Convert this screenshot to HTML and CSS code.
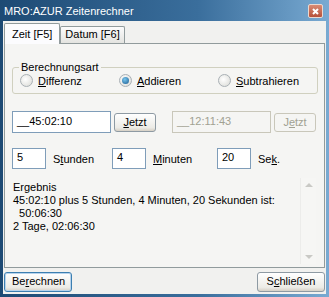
FILE: index.html
```html
<!DOCTYPE html>
<html lang="de">
<head>
    <meta charset="UTF-8">
    <title>MRO:AZUR Zeitenrechner</title>
    <link rel="stylesheet" href="styles.css">
</head>
<body>
    <div class="window">
        <div class="titlebar">
            <span class="title">MRO:AZUR Zeitenrechner</span>
            <span class="close">
                <svg width="13" height="13" viewBox="0 0 13 13">
                    <path d="M4 4 L9 9 M9 4 L4 9" stroke="#fff" stroke-width="2"/>
                </svg>
            </span>
        </div>
        <div class="client">
            <div class="tabs">
                <div class="tab active">Zeit [F5]</div>
                <div class="tab">Datum [F6]</div>
            </div>
            <div class="panel">
                <fieldset class="group">
                    <legend>Berechnungsart</legend>
                    <label class="radio"><span class="dot"></span><span><u>D</u>ifferenz</span></label>
                    <label class="radio"><span class="dot checked"></span><span><u>A</u>ddieren</span></label>
                    <label class="radio"><span class="dot"></span><span><u>S</u>ubtrahieren</span></label>
                </fieldset>

                <div class="time-row">
                    <div class="field time">__45:02:10</div>
                    <div class="btn"><u>J</u>etzt</div>
                    <div class="field time disabled">__12:11:43</div>
                    <div class="btn disabled">J<u>e</u>tzt</div>
                </div>

                <div class="num-row">
                    <div class="field num">5</div>
                    <span class="unit">S<u>t</u>unden</span>
                    <div class="field num">4</div>
                    <span class="unit wide"><u>M</u>inuten</span>
                    <div class="field num">20</div>
                    <span class="unit">Se<u>k</u>.</span>
                </div>

                <div class="result">
                    <div class="result-text">Ergebnis
45:02:10 plus 5 Stunden, 4 Minuten, 20 Sekunden ist:
  50:06:30
2 Tage, 02:06:30</div>
                    <div class="scrollbar">
                        <span class="arrow up"></span>
                        <span class="arrow down"></span>
                    </div>
                </div>
            </div>
            <div class="footer">
                <div class="btn default">Be<u>r</u>echnen</div>
                <div class="btn">S<u>c</u>hließen</div>
            </div>
        </div>
    </div>
</body>
</html>
```

FILE: styles.css
```css
* {
    box-sizing: border-box;
    margin: 0;
    padding: 0;
}

body {
    font-family: "Liberation Sans", Tahoma, sans-serif;
    font-size: 11px;
    color: #000;
    background: #fff;
}

u {
    text-decoration: underline;
    text-underline-offset: 1px;
}

.window {
    width: 329px;
    height: 297px;
    background: linear-gradient(to right, #1d4a74, #3a6e9c 60%, #79aad2);
    padding: 0 3px 3px 3px;
    display: flex;
    flex-direction: column;
}

.titlebar {
    height: 22px;
    display: flex;
    align-items: center;
    justify-content: space-between;
    padding: 0 3px 0 1px;
}

.title {
    color: #fff;
    font-size: 11px;
}

.close {
    width: 15px;
    height: 14px;
    border: 1px solid #e9d8d0;
    border-radius: 2px;
    background: linear-gradient(#d98b74, #b6513a);
    display: flex;
    align-items: center;
    justify-content: center;
    margin-top: 1px;
}

.client {
    flex: 1;
    background: #f1f1ef;
    padding: 2px 1px 2px 1px;
    display: flex;
    flex-direction: column;
}

.tabs {
    display: flex;
    align-items: flex-end;
    height: 20px;
    position: relative;
    z-index: 1;
}

.tab {
    height: 17px;
    padding: 1px 4px 0;
    border: 1px solid #919b9c;
    border-bottom: none;
    border-radius: 2px 2px 0 0;
    background: linear-gradient(#fcfcfc, #e4e4e0);
}

.tab.active {
    height: 21px;
    background: #fcfcfe;
    padding: 4px 7px 0;
    margin-bottom: -1px;
}

.panel {
    height: 225px;
    border: 1px solid #919b9c;
    background: #f5f5f3;
    padding: 8px 4px 0 7px;
    display: flex;
    flex-direction: column;
}

.group {
    border: 1px solid #d0d0bf;
    border-radius: 3px;
    height: 33px;
    width: 305px;
    padding: 1px 0 0 7px;
    display: flex;
    align-items: center;
    margin-top: 9px;
}

.group legend {
    padding: 0 2px;
    margin-left: -1px;
}

.radio {
    display: flex;
    align-items: center;
    gap: 5px;
    width: 99px;
}

.dot {
    width: 13px;
    height: 13px;
    border-radius: 50%;
    border: 1px solid #a9b0b5;
    background: radial-gradient(circle at 40% 40%, #ffffff, #d8d9d4);
    display: flex;
    align-items: center;
    justify-content: center;
}

.dot.checked::after {
    content: "";
    width: 7px;
    height: 7px;
    border-radius: 50%;
    background: radial-gradient(circle at 40% 35%, #78c6ee, #1a5a8f);
}

.time-row {
    display: flex;
    align-items: center;
    margin-top: 17px;
    height: 22px;
}

.field {
    height: 22px;
    border: 1px solid #7f9db9;
    background: #fff;
    padding: 3px 4px 0;
}

.field.time {
    width: 99px;
}

.field.disabled {
    border-color: #c9c7ba;
    background: #f5f5f3;
    color: #a1a192;
    margin-left: 16px;
}

.btn {
    height: 19px;
    padding: 2px 7px 0;
    border: 1px solid #8e9aa3;
    border-radius: 3px;
    background: linear-gradient(#ffffff, #ecebe6 80%, #d6d0c5);
    text-align: center;
}

.time-row .btn {
    width: 42px;
    margin-left: 3px;
}

.btn.disabled {
    color: #a1a192;
    border-color: #c9c7ba;
    background: #f5f5f3;
}

.num-row {
    display: flex;
    align-items: center;
    margin-top: 15px;
    height: 21px;
}

.field.num {
    width: 34px;
    height: 21px;
    padding-top: 2px;
}

.unit {
    width: 66px;
    padding-left: 7px;
}

.unit.wide {
    width: 71px;
}

.result {
    display: flex;
    margin: 9px 0 0 -6px;
    height: 86px;
    width: 310px;
}

.result-text {
    flex: 1;
    white-space: pre;
    line-height: 13px;
    padding: 3px 0 0 7px;
}

.scrollbar {
    width: 16px;
    background: #f6f6f4;
    border-left: 1px solid #ececea;
    display: flex;
    flex-direction: column;
    justify-content: space-between;
    align-items: center;
    padding: 5px 0;
}

.arrow {
    width: 0;
    height: 0;
    border-left: 4px solid transparent;
    border-right: 4px solid transparent;
}

.arrow.up {
    border-bottom: 4px solid #c9c9c5;
}

.arrow.down {
    border-top: 4px solid #c9c9c5;
}

.footer {
    display: flex;
    justify-content: space-between;
    margin-top: 4px;
}

.footer .btn {
    width: 68px;
    height: 20px;
}

.footer .btn.default {
    border: 1px solid #3c7fb1;
    box-shadow: inset 0 0 0 1px #b7d3ec;
}
```
